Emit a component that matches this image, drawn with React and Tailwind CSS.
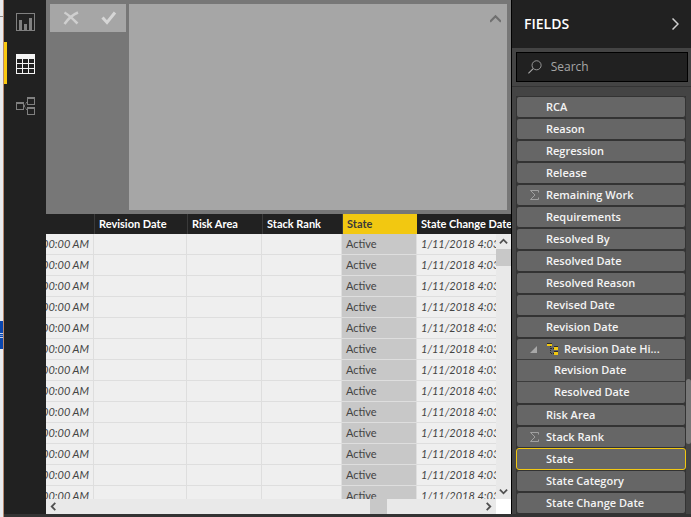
import React from "react";

const FIELDS = [
  { name: "RCA" },
  { name: "Reason" },
  { name: "Regression" },
  { name: "Release" },
  { name: "Remaining Work", numeric: true },
  { name: "Requirements" },
  { name: "Resolved By" },
  { name: "Resolved Date" },
  { name: "Resolved Reason" },
  { name: "Revised Date" },
  { name: "Revision Date" },
  { name: "Revision Date Hi...", children: ["Revision Date", "Resolved Date"] },
  { name: "Risk Area" },
  { name: "Stack Rank", numeric: true },
  { name: "State", selected: true },
  { name: "State Category" },
  { name: "State Change Date" },
];

const ROWS = Array.from({ length: 13 }, (_, i) => i);

function ReportIcon() {
  return (
    <svg width="19" height="18" viewBox="0 0 19 18" fill="none" aria-hidden="true">
      <rect x="0.5" y="0.5" width="18" height="17" stroke="#808080" />
      <path d="M3 7h3v10H3zM8 11h3v6H8zM13 5h3v12h-3z" fill="#808080" />
    </svg>
  );
}

function DataIcon() {
  return (
    <svg width="19" height="20" viewBox="0 0 19 20" fill="none" aria-hidden="true">
      <path
        fillRule="evenodd"
        fill="#f4f4f4"
        d="M0 0h19v20H0zM1 5v4h5V5zM7 5v4h5V5zM13 5v4h5V5zM1 10v4h5v-4zM7 10v4h5v-4zM13 10v4h5v-4zM1 15v4h5v-4zM7 15v4h5v-4zM13 15v4h5v-4z"
      />
    </svg>
  );
}

function ModelIcon() {
  return (
    <svg width="19" height="18" viewBox="0 0 19 18" fill="none" aria-hidden="true">
      <g stroke="#808080">
        <rect x="0.5" y="5.5" width="7" height="7" />
        <rect x="11.5" y="0.5" width="7" height="7" />
        <rect x="11.5" y="10.5" width="7" height="7" />
        <path d="M8 9l3-4M8 9l3 4" strokeDasharray="2 1" />
      </g>
      <path d="M0 5h8v2H0zM11 0h8v2h-8zM11 10h8v2h-8z" fill="#808080" />
    </svg>
  );
}

function Chevron({ points, size = 10, width = 2 }) {
  return (
    <svg width={size} height={size} viewBox="0 0 10 10" fill="none" aria-hidden="true">
      <polyline points={points} stroke="currentColor" strokeWidth={width} />
    </svg>
  );
}

function SigmaIcon() {
  return (
    <svg width="9" height="10" viewBox="0 0 9 10" fill="none" aria-hidden="true">
      <path d="M8.5 2.5v-2h-8L5 5 .5 9.500h8v-2" stroke="#a0a0a0" />
    </svg>
  );
}

function HierarchyIcon() {
  return (
    <svg width="12" height="12" viewBox="0 0 12 12" fill="none" aria-hidden="true">
      <path d="M3.500 3v8M4 5.500h4M4 10.500h4" stroke="#2b2b2b" strokeDasharray="1 1" />
      <path d="M0 1h5v2H0zM7 4h4v3H7zM7 9h4v3H7z" fill="#f2c811" />
      <path d="M0 0h5v1H0zM7 3h4v1H7zM7 8h4v1H7z" fill="#2b2b2b" />
    </svg>
  );
}

function NavButton({ label, active, children }) {
  return (
    <button
      type="button"
      aria-label={label}
      className={
        active
          ? "flex h-[42px] w-full items-center justify-center border-l-[3px] border-[#f9c80e] pt-[2px] pr-[2px]"
          : "flex h-[42px] w-full items-center justify-center border-l-[3px] border-transparent pt-[2px] pr-[2px]"
      }
    >
      {children}
    </button>
  );
}

function Sidebar() {
  return (
    <nav className="flex w-[42px] shrink-0 flex-col bg-[#212121]">
      <NavButton label="Report"><ReportIcon /></NavButton>
      <NavButton label="Data" active><DataIcon /></NavButton>
      <NavButton label="Relationships"><ModelIcon /></NavButton>
    </nav>
  );
}

function WindowEdge() {
  return (
    <div className="flex w-1 shrink-0 flex-col border-r border-[#b98a70] bg-[#e9ebee]">
      <div className="mt-4 h-px bg-[#8a8a8a]" />
      <div className="mt-[304px] flex h-7 flex-col justify-center gap-px bg-[#0a47b0]">
        <div className="h-px bg-[#c5d5f0]" />
        <div className="h-px bg-[#6f97d8]" />
        <div className="h-px bg-[#c5d5f0]" />
      </div>
    </div>
  );
}

function FormulaBar() {
  return (
    <div className="flex h-[214px] shrink-0 items-stretch gap-[3px] bg-[#777777] p-1">
      <div className="flex h-7 w-[76px] shrink-0 bg-[#a6a6a6]">
        <button type="button" aria-label="Cancel" className="flex flex-1 items-center justify-center pl-1">
          <svg width="16" height="14" viewBox="0 0 16 14" fill="none" aria-hidden="true">
            <path d="M1.500 1.500C6 4 10 8 14.500 12.500" stroke="#cfcfcf" strokeWidth="2.500" />
            <path d="M15 1.500C9 4 5 8 1.500 13" stroke="#cfcfcf" strokeWidth="2.500" />
          </svg>
        </button>
        <button type="button" aria-label="Commit" className="flex flex-1 items-center justify-center pl-1">
          <svg width="16" height="14" viewBox="0 0 16 14" fill="none" aria-hidden="true">
            <path d="M1.500 6.500l4.500 5L14 1.500" stroke="#d6d6d6" strokeWidth="3" />
          </svg>
        </button>
      </div>
      <div className="flex min-w-0 flex-1 bg-[#a6a6a6]">
        <textarea aria-label="Formula" className="min-w-0 flex-1 resize-none bg-transparent p-2 text-xs outline-none" />
        <button type="button" aria-label="Collapse formula bar" className="flex h-7 w-6 items-center justify-center text-[#707070]">
          <Chevron points="0,8 5,3 10,8" size={11} />
        </button>
      </div>
    </div>
  );
}

function DataGrid() {
  const head = "border-l border-[#3a3a3a] px-1 py-0 text-left font-bold whitespace-nowrap";
  const cell = "border-r border-b border-[#dedede]";
  return (
    <div className="relative flex min-h-0 flex-1 flex-col bg-white">
      <div className="min-h-0 flex-1 overflow-hidden bg-[#efefef]">
        <table className="w-full table-fixed border-separate border-spacing-0 font-['Lato','Open_Sans',sans-serif] text-[11px] text-[#444444]">
          <colgroup>
            <col className="w-[48px]" />
            <col className="w-[93px]" />
            <col className="w-[75px]" />
            <col className="w-[80px]" />
            <col className="w-[75px]" />
            <col />
          </colgroup>
          <thead>
            <tr className="h-5 bg-[#212121] text-white">
              <th aria-label="Time" className="p-0" />
              <th className={head}>Revision Date</th>
              <th className={head}>Risk Area</th>
              <th className={head}>Stack Rank</th>
              <th className="border-l border-[#3a3a3a] bg-[#f2c811] px-1 py-0 text-left font-bold text-[#3a3a3a]">State</th>
              <th className="overflow-hidden py-0 pl-1 text-left font-bold whitespace-nowrap">State Change Date</th>
            </tr>
          </thead>
          <tbody>
            {ROWS.map((row) => (
              <tr key={row} className="h-[21px]">
                <td className={cell + " p-0 italic"}>
                  <div className="flex justify-end overflow-hidden pr-1 whitespace-nowrap">00:00 AM</div>
                </td>
                <td className={cell} />
                <td className={cell} />
                <td className={cell} />
                <td className="border-r border-b border-[#dedede] bg-[#c8c8c8] px-1 py-0">Active</td>
                <td className="overflow-hidden border-b border-[#dedede] py-0 pl-1 whitespace-nowrap italic">
                  1/11/2018 4:03
                </td>
              </tr>
            ))}
          </tbody>
        </table>
      </div>
      <div className="absolute top-5 right-0 bottom-[15px] flex w-[15px] flex-col items-center bg-[#e9e9e9] text-[#505050]">
        <div className="flex h-[15px] items-center"><Chevron points="1,7 5,3 9,7" size={9} /></div>
        <div className="h-[17px] w-full bg-[#c8c8c8]" />
        <div className="mt-auto flex h-[15px] items-center"><Chevron points="1,3 5,7 9,3" size={9} /></div>
      </div>
      <div className="mr-[15px] flex h-[15px] shrink-0 items-center bg-[#e9e9e9] text-[#505050]">
        <div className="flex w-[15px] justify-center"><Chevron points="7,1 3,5 7,9" size={9} /></div>
        <div className="flex h-full flex-1 justify-end pr-[94px]">
          <div className="h-full w-[17px] bg-[#c8c8c8]" />
        </div>
        <div className="flex w-[15px] justify-center"><Chevron points="3,1 7,5 3,9" size={9} /></div>
      </div>
    </div>
  );
}

function FieldItem({ field }) {
  if (field.children) {
    return (
      <li className="overflow-hidden rounded-[3px] border border-[#333333] bg-[#666666]">
        <button type="button" aria-expanded="true" className="flex h-5 w-full items-center pl-[13px]">
          <svg width="7" height="7" viewBox="0 0 7 7" aria-hidden="true">
            <path d="M7 0v7H0z" fill="#a8a8a8" />
          </svg>
          <span className="ml-[10px] flex w-[17px]"><HierarchyIcon /></span>
          {field.name}
        </button>
        <ul>
          {field.children.map((child) => (
            <li key={child} className="border-t border-[#3c3c3c]">
              <button type="button" className="flex h-[21px] w-full items-center pl-[37px]">{child}</button>
            </li>
          ))}
        </ul>
      </li>
    );
  }
  return (
    <li
      className={
        field.selected
          ? "rounded-[3px] border border-[#f2c811] bg-[#666666]"
          : "rounded-[3px] border border-[#333333] bg-[#666666]"
      }
    >
      <button type="button" className="flex h-5 w-full items-center pl-[13px]">
        <span className="w-4 shrink-0">{field.numeric && <SigmaIcon />}</span>
        {field.name}
      </button>
    </li>
  );
}

function FieldsPane() {
  return (
    <aside className="flex w-[180px] shrink-0 flex-col border-l border-black bg-[#444444] text-white">
      <header className="flex h-12 shrink-0 items-center justify-between bg-[#212121] px-3">
        <h2 className="text-sm font-semibold">FIELDS</h2>
        <button type="button" aria-label="Collapse pane" className="flex text-[#d0d0d0]">
          <svg width="7" height="12" viewBox="0 0 7 12" fill="none" aria-hidden="true">
            <path d="M.5.5L6 6 .5 11.500" stroke="currentColor" strokeWidth="1.500" />
          </svg>
        </button>
      </header>
      <div className="shrink-0 border-b border-[#333333] pt-1 pr-[3px] pb-1 pl-1">
        <label className="flex h-[30px] items-center gap-[9px] border border-black bg-[#212121] pl-[11px]">
          <svg width="16" height="16" viewBox="0 0 16 16" fill="none" aria-hidden="true">
            <circle cx="10" cy="6" r="5.300" stroke="#a8a8a8" />
            <path d="M6 10L.5 15.500" stroke="#a8a8a8" strokeWidth="1.300" />
          </svg>
          <input
            type="search"
            aria-label="Search fields"
            placeholder="Search"
            className="w-full min-w-0 bg-transparent text-xs outline-none placeholder:text-[#a6a6a6]"
          />
        </label>
      </div>
      <div className="flex min-h-0 flex-1 overflow-hidden pt-[9px] pl-1">
        <ul className="min-w-0 flex-1 self-start bg-[#333333] text-[11px] font-semibold text-[#f4f4f4]">
          {FIELDS.map((field) => (
            <FieldItem key={field.name} field={field} />
          ))}
        </ul>
        <div className="w-[5px] shrink-0 pt-[283px]">
          <div className="h-[65px] rounded-[3px] bg-[#777777]" />
        </div>
      </div>
    </aside>
  );
}

export default function App() {
  return (
    <div className="flex h-screen overflow-hidden bg-[#212121] font-['Open_Sans','Noto_Sans',sans-serif]">
      <WindowEdge />
      <div className="flex min-w-0 flex-1 flex-col border-b-[3px] border-[#333333]">
        <div className="flex min-h-0 flex-1">
          <Sidebar />
          <main className="flex min-w-0 flex-1 flex-col">
            <FormulaBar />
            <DataGrid />
          </main>
          <FieldsPane />
        </div>
      </div>
    </div>
  );
}
